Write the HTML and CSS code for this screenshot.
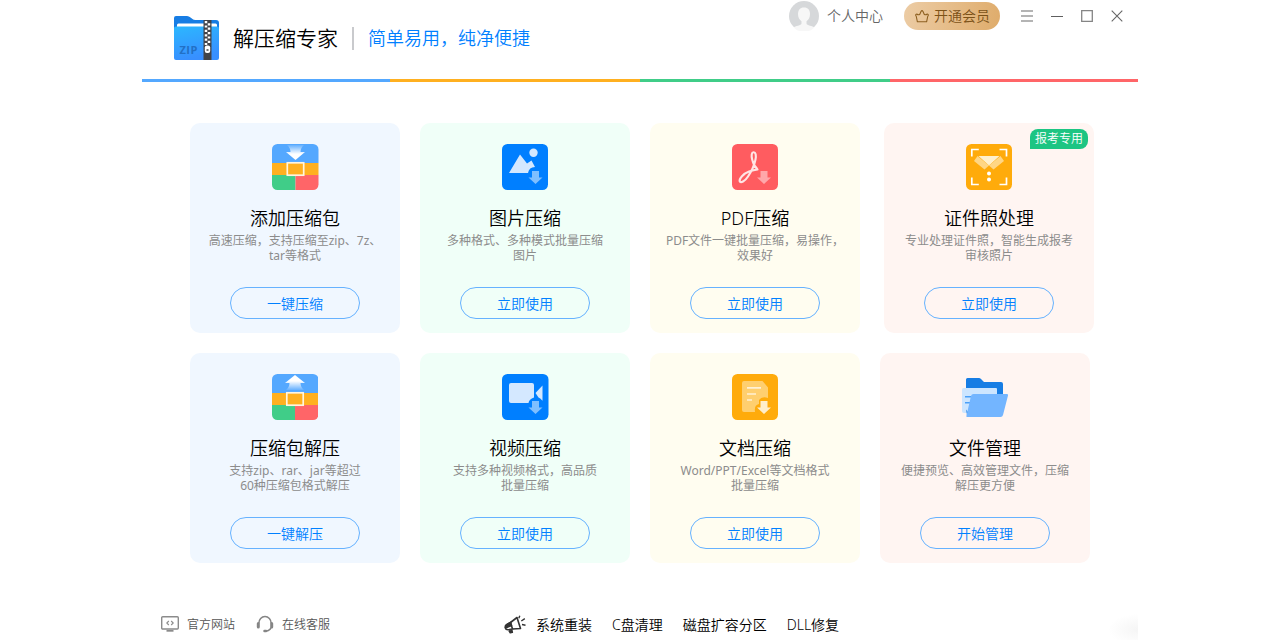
FILE: index.html
```
<!DOCTYPE html>
<html lang="zh-CN">
<head>
    <meta charset="UTF-8">
    <title>解压缩专家</title>
    <link rel="stylesheet" href="styles.css">
</head>
<body>

<div class="window">
    <header class="header">
        <div class="brand">
            <svg class="logo" width="46" height="46" viewBox="0 0 46 46">
                <defs>
                    <linearGradient id="folderFill" x1="0" y1="0" x2="0.3" y2="1">
                        <stop offset="0" stop-color="#2cb7ff"/>
                        <stop offset="1" stop-color="#388fff"/>
                    </linearGradient>
                </defs>
                <path d="M0 3q0-2 2-2h11q2 0 3.500 1.500l2 1.500q1 1 3 1h20.500q3 0 3 3v8H0z" fill="#177de4"/>
                <rect x="3" y="8.500" width="40" height="5" rx="1.500" fill="#fff"/>
                <path d="M0 13q0-1.500 2-1.500h41q2 0 2 2V43q0 2-2 2H2q-2 0-2-2z" fill="url(#folderFill)"/>
                <path d="M29.500 5h8v40h-8z" fill="#424348"/>
                <path d="M32 6v24M35 8.200v22" stroke="#fff" stroke-width="2.500" stroke-dasharray="2.200 2.200"/>
                <rect x="30.800" y="30.500" width="5.400" height="7.500" rx="2" fill="#fff"/>
                <rect x="32.500" y="34" width="2" height="2" fill="#777"/>
                <text x="5.500" y="38.500" class="logo-text">ZIP</text>
            </svg>
            <h1>解压缩专家</h1>
            <span class="divider"></span>
            <span class="slogan">简单易用，纯净便捷</span>
        </div>
        <div class="tools">
            <svg class="avatar" width="30" height="30" viewBox="0 0 30 30">
                <circle cx="15" cy="15" r="15" fill="#d6d8da"/>
                <path d="M15 6.500c-4 0-6 2.700-6 6.500 0 3.500 1.500 6 3.500 7.200v2.300c0 2-6.500 2.500-8 4A15 15 0 0 0 25.500 26.500c-1.500-1.500-8-2-8-4v-2.300c2-1.200 3.500-3.700 3.500-7.200 0-3.800-2-6.500-6-6.500z" fill="#f7f7f7"/>
            </svg>
            <span class="user">个人中心</span>
            <div class="vip">
                <svg width="14" height="14" viewBox="0 0 14 14" fill="none" stroke="#8d5f20" stroke-width="1.100" stroke-linejoin="round">
                    <path d="M2.400 12.800L1.300 7.500Q-.2 5.500 1.800 5q1.500 1.300 3 .3L6 2.500q1-1.800 2 0l1.200 2.800q1.500 1 3-.3 2 .5.500 2.500l-1.100 5.300z"/>
                </svg>
                <span>开通会员</span>
            </div>
            <div class="win-buttons">
                <svg width="12" height="12" viewBox="0 0 12 12" stroke="#9c9c9c" stroke-width="1.500"><path d="M0 1h12M0 6h12M0 11h12"/></svg>
                <svg width="12" height="12" viewBox="0 0 12 12" stroke="#5f5f5f"><path d="M0 6.500h12"/></svg>
                <svg width="12" height="12" viewBox="0 0 12 12" fill="none" stroke="#858585" stroke-width="1.300"><path d="M.7.700h10.600v10.600H.7z"/></svg>
                <svg width="12" height="12" viewBox="0 0 12 12" stroke="#666" stroke-width="1.100"><path d="M.7.700l10.600 10.600M11.300.700L.7 11.300"/></svg>
            </div>
        </div>
    </header>

    <div class="stripe">
        <i class="blue"></i><i class="orange"></i><i class="green"></i><i class="red"></i>
    </div>

    <main class="cards">
        <div class="row">
            <div class="card card-blue">
                <svg width="47" height="46" viewBox="0 0 47 46">
                    <defs>
                        <clipPath id="box"><rect width="46.500" height="46" rx="5.500"/></clipPath>
                        <linearGradient id="fadeDown" x1="0" y1="0" x2="0" y2="1">
                            <stop offset="0" stop-color="#fff" stop-opacity="0.100"/>
                            <stop offset="0.600" stop-color="#fff"/>
                        </linearGradient>
                    </defs>
                    <g clip-path="url(#box)">
                        <path d="M0 0h47v19H0z" fill="#54a8ff"/>
                        <path d="M0 19h47v12H0z" fill="#ffb020"/>
                        <path d="M0 31h23.500v15H0z" fill="#40cd88"/>
                        <path d="M23.500 31H47v15H23.500z" fill="#ff6568"/>
                    </g>
                    <path d="M15 1h17q-3.500 3-3.500 7H33l-9.500 8L14 8h4.500q0-4-3.500-7z" fill="url(#fadeDown)"/>
                    <rect x="15.300" y="18.800" width="16.400" height="12.400" fill="#ffb020" stroke="#fff5df" stroke-width="1.700"/>
                </svg>
                <h2>添加压缩包</h2>
                <p>高速压缩，支持压缩至zip、7z、<br>tar等格式</p>
                <button>一键压缩</button>
            </div>
            <div class="card card-green">
                <svg width="46" height="46" viewBox="0 0 46 46">
                    <rect width="46" height="46" rx="5.500" fill="#007fff"/>
                    <path d="M7 29L18 10.500l7 9 4.500-3L33 23q-6 0-7 6z" fill="#d4e8ff"/>
                    <circle cx="31.500" cy="8.800" r="4.200" fill="#d4e8ff"/>
                    <path d="M30 27h7v6.500h3.500L33.500 40l-7-6.500H30z" fill="#7fbfff"/>
                </svg>
                <h2>图片压缩</h2>
                <p>多种格式、多种模式批量压缩<br>图片</p>
                <button>立即使用</button>
            </div>
            <div class="card card-yellow">
                <svg width="46" height="46" viewBox="0 0 46 46">
                    <rect width="46" height="46" rx="5.500" fill="#ff5c60"/>
                    <path d="M25.500 25.500C20.500 21 17.500 8.500 21.500 8.200c4.500-.3 2.500 12.500-5.500 24.300-3 4.800-7.500 7-8.300 4.800-.8-2.300 3.800-7.800 9.300-9.800 3-1 5.500-1.700 8.500-2-1-1.800-1.700-2.700-3-4" fill="none" stroke="#ffe5e5" stroke-width="2.100" stroke-linejoin="round"/>
                    <path d="M28.500 27h7v6.500H39L32 40l-7-6.500h3.500z" fill="#ffa7aa"/>
                </svg>
                <h2>PDF压缩</h2>
                <p>PDF文件一键批量压缩，易操作，<br>效果好</p>
                <button>立即使用</button>
            </div>
            <div class="card card-red card-photo">
                <span class="tag">报考专用</span>
                <svg width="46" height="46" viewBox="0 0 46 46">
                    <rect width="46" height="46" rx="5.500" fill="#ffab0b"/>
                    <path d="M5.800 12.500V5.500h7M33.500 5.500h7v7M40.500 33.500v7h-7M12.800 40.500h-7v-7" fill="none" stroke="#fff" stroke-width="1.700"/>
                    <path d="M12.500 12h21L23 21.500z" fill="#fff0ce"/>
                    <path d="M11.500 12L23 21.500l-4.500 4L8 17z" fill="#ffd685"/>
                    <path d="M34.500 12L23 21.500l4.500 4L38 17z" fill="#ffd685"/>
                    <circle cx="23" cy="29.500" r="2" fill="#fff"/>
                    <circle cx="23" cy="35.500" r="2" fill="#fff"/>
                </svg>
                <h2>证件照处理</h2>
                <p>专业处理证件照，智能生成报考<br>审核照片</p>
                <button>立即使用</button>
            </div>
        </div>

        <div class="row">
            <div class="card card-blue">
                <svg width="46" height="46" viewBox="0 0 46 46">
                    <defs>
                        <linearGradient id="fadeUp" x1="0" y1="1" x2="0" y2="0">
                            <stop offset="0" stop-color="#fff" stop-opacity="0.100"/>
                            <stop offset="0.600" stop-color="#fff"/>
                        </linearGradient>
                    </defs>
                    <g clip-path="url(#box)">
                        <path d="M0 0h46v19H0z" fill="#54a8ff"/>
                        <path d="M0 19h46v12H0z" fill="#ffb020"/>
                        <path d="M0 31h23v15H0z" fill="#40cd88"/>
                        <path d="M23 31h23v15H23z" fill="#ff6568"/>
                    </g>
                    <path d="M14 16h18q-3.500-3-3.500-7H33L23 1 13 9h4.500q0 4-3.500 7z" fill="url(#fadeUp)"/>
                    <rect x="14.800" y="18.800" width="16.400" height="12.400" fill="#ffb020" stroke="#fff5df" stroke-width="1.700"/>
                </svg>
                <h2>压缩包解压</h2>
                <p>支持zip、rar、jar等超过<br>60种压缩包格式解压</p>
                <button>一键解压</button>
            </div>
            <div class="card card-green">
                <svg width="47" height="46" viewBox="0 0 47 46">
                    <rect width="46.500" height="46" rx="5.500" fill="#007fff"/>
                    <path d="M9 9h21q2 0 2 2v12.500q-5 1.500-5.500 5.500H9q-2 0-2-2V11q0-2 2-2z" fill="#d4e8ff"/>
                    <path d="M40.500 11.500v15.300q-2.500-2.800-4-3.300L33.500 19z" fill="#d4e8ff"/>
                    <path d="M30 27h7v6.500h3.500L33.500 40l-7-6.500H30z" fill="#7fbfff"/>
                </svg>
                <h2>视频压缩</h2>
                <p>支持多种视频格式，高品质<br>批量压缩</p>
                <button>立即使用</button>
            </div>
            <div class="card card-yellow">
                <svg width="46" height="46" viewBox="0 0 46 46">
                    <rect width="46" height="46" rx="5.500" fill="#ffab0b"/>
                    <path d="M12 7h18.500l5.500 6.500V24q-6-2-9 2v4q-5 1-4 8H12q-2 0-2-2V9q0-2 2-2z" fill="#ffcf6f"/>
                    <path d="M15 13.800h14M15 20h9M15 26h5" stroke="#fff1d5" stroke-width="1.700"/>
                    <path d="M28.500 27h7v6.500H39L32 40l-7-6.500h3.500z" fill="#ffeecb"/>
                </svg>
                <h2>文档压缩</h2>
                <p>Word/PPT/Excel等文档格式<br>批量压缩</p>
                <button>立即使用</button>
            </div>
            <div class="card card-red">
                <svg width="46" height="46" viewBox="0 0 46 46">
                    <path d="M4 5.500Q4 4 5.500 4H17q1 0 2 1l3 3h17q2 0 2 2v14H4z" fill="#177de4"/>
                    <path d="M1.500 14H34q1 0 1 1v24H2q-2 0-2-2V15.500Q0 14 1.500 14z" fill="#cce5ff"/>
                    <path d="M3 22.700h8M3 28.700h7" stroke="#4a9ff8" stroke-width="1.500"/>
                    <path d="M4.200 35.500l4 6H5z" fill="#177de4"/>
                    <path d="M11.500 20H45q1.500 0 1 1.500l-5 19.500q-.5 2-2.500 2H5.500q-1.500 0-1-1.500L9 22q.5-2 2.500-2z" fill="#73b5ff"/>
                </svg>
                <h2>文件管理</h2>
                <p>便捷预览、高效管理文件，压缩<br>解压更方便</p>
                <button>开始管理</button>
            </div>
        </div>
    </main>

    <footer class="footer">
        <div class="support">
            <svg width="18" height="16" viewBox="0 0 18 16" fill="none" stroke="#8b8b8b" stroke-width="1.400">
                <rect x=".7" y=".7" width="16.600" height="12.300" rx="1"/>
                <path d="M7.800 5L5.800 7l2 2M10.200 5l2 2-2 2" stroke-width="1.100"/>
                <path d="M5.500 14.800h7" stroke-width="1.800"/>
            </svg>
            <span>官方网站</span>
            <svg class="headset" width="18" height="18" viewBox="0 0 18 18" fill="none" stroke="#858585" stroke-width="1.500">
                <path d="M2.800 8.500a6.200 6.900 0 0 1 12.400 0M15 12.500q-1 3.200-5 3.500"/>
                <path d="M2.300 8.500v3.500M15.700 8.500v3.500" stroke-width="3" stroke-linecap="round"/>
                <path d="M8.500 16h1.500" stroke-width="2.500" stroke-linecap="round"/>
            </svg>
            <span>在线客服</span>
        </div>
        <div class="links">
            <svg width="22" height="20" viewBox="0 0 22 20" fill="none" stroke="#333" stroke-width="1.600" stroke-linejoin="round">
                <path d="M6.500 7.500L13 2.500l3.500 11-8 .5"/>
                <path d="M6.500 7.500l2 6.500-4.500.8q-2.300 0-2.800-2-.3-2 1.300-3z"/>
                <path d="M2.500 10l4-2.500 1 3-5 2zM5 15.500l1.300 2.300 2-.5-.5-2.500" fill="#333"/>
                <path d="M14.800 3.300L15.800.8M17.300 6l3.500-2.300M18 9.500l3.500.7" stroke-width="1.400"/>
            </svg>
            <span>系统重装</span>
            <span>C盘清理</span>
            <span>磁盘扩容分区</span>
            <span>DLL修复</span>
        </div>
        <div class="corner"></div>
    </footer>
</div>

</body>
</html>
```

FILE: styles.css
```
* {
    margin: 0;
    padding: 0;
    box-sizing: border-box;
}
body {
    height: 640px;
    overflow: hidden;
    background: #fff;
    font-family: "Noto Sans", "Noto Sans CJK SC", sans-serif;
    font-weight: 350;
    color: #000;
}
svg {
    display: block;
    flex: none;
}
.window {
    width: 996px;
    height: 640px;
    margin: 0 auto;
    display: flex;
    flex-direction: column;
}

/* header */
.header {
    height: 79px;
    display: flex;
    justify-content: space-between;
    align-items: flex-start;
    padding: 0 15px 0 32px;
    white-space: nowrap;
}
.brand {
    display: flex;
    align-items: center;
    padding-top: 15px;
}
.logo-text {
    font-family: "Open Sans", sans-serif;
    font-size: 11px;
    font-weight: 700;
    letter-spacing: 0.5px;
    fill: #2270c4;
}
.brand h1 {
    margin-left: 13px;
    font-size: 21px;
    line-height: 30px;
    font-weight: 350;
}
.divider {
    width: 2px;
    height: 23px;
    margin: 0 14px 0 14px;
    background: #c9cacd;
}
.slogan {
    font-size: 18px;
    line-height: 26px;
    color: #0080ff;
}
.tools {
    display: flex;
    align-items: center;
    padding-top: 1px;
    font-size: 14px;
    line-height: 20px;
}
.user {
    margin: 0 21px 0 8px;
    color: #666;
}
.vip {
    width: 96px;
    height: 28px;
    display: flex;
    align-items: center;
    gap: 5px;
    padding-left: 11px;
    border-radius: 14px;
    background: linear-gradient(100deg, #eccca5, #dfac6b);
    color: #7c5218;
}
.win-buttons {
    display: flex;
    gap: 18px;
    margin-left: 21px;
}

.stripe {
    height: 3px;
    display: grid;
    grid-template-columns: 248px 250px 250px 248px;
}
.stripe .blue { background: #54a8ff; }
.stripe .orange { background: #ffb020; }
.stripe .green { background: #40cd88; }
.stripe .red { background: #ff6568; }

/* cards */
.cards {
    display: flex;
    flex-direction: column;
    gap: 20px;
    padding: 41px 0 0 48px;
}
.row {
    display: flex;
    gap: 20px;
}
.card {
    position: relative;
    width: 210px;
    height: 210px;
    display: flex;
    flex-direction: column;
    align-items: center;
    padding-top: 21px;
    border-radius: 10px;
    text-align: center;
    white-space: nowrap;
}
.card-blue { background: #f0f7ff; }
.card-green { background: #f0fff8; }
.card-yellow { background: #fffdf0; }
.card-red { background: #fff5f2; }
.card-photo {
    margin-left: 4px;
}
.card h2 {
    margin-top: 16px;
    font-size: 18px;
    line-height: 24px;
    font-weight: 350;
}
.card p {
    margin-top: 3px;
    font-size: 12px;
    line-height: 15px;
    font-weight: 400;
    color: #8c8c8c;
}
.card button {
    width: 130px;
    height: 32px;
    margin-top: 24px;
    border: 1px solid #66b2ff;
    border-radius: 16px;
    background: none;
    font-family: inherit;
    font-size: 14px;
    font-weight: 350;
    color: #0080ff;
}
.tag {
    position: absolute;
    top: 6px;
    right: 6px;
    width: 58px;
    height: 20px;
    border-radius: 8px 8px 8px 0;
    background: #1dc583;
    font-size: 12px;
    line-height: 20px;
    color: #fff;
}

/* footer */
.footer {
    position: relative;
    flex: 1;
    display: flex;
    align-items: center;
    padding: 46px 0 0 19px;
    white-space: nowrap;
}
.support {
    width: 343px;
    display: flex;
    align-items: center;
    margin-bottom: 2px;
    font-size: 12px;
    color: #555;
}
.support span {
    margin-left: 8px;
}
.support .headset {
    margin-left: 21px;
}
.links {
    display: flex;
    align-items: center;
    gap: 20px;
    font-size: 14px;
    line-height: 20px;
}
.links svg {
    margin-right: -10px;
}
.corner {
    position: absolute;
    right: 0;
    bottom: 0;
    width: 30px;
    height: 26px;
    background: radial-gradient(ellipse at 100% 60%, #f5f5f5, #fff 70%);
}
```
